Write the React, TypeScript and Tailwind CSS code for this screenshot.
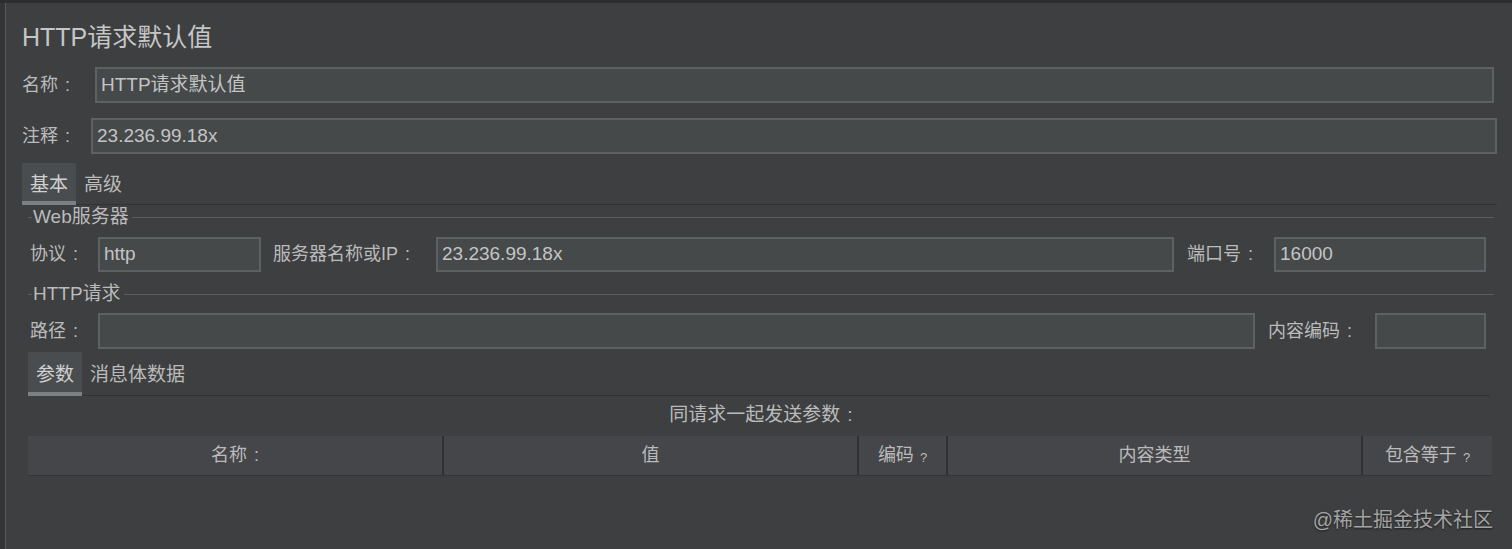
import React from 'react';

const FONT = "font-['Liberation_Sans','Noto_Sans_CJK_SC',sans-serif]";
const INPUT = 'h-full bg-[#45494a] border-2 border-[#5e6163] flex items-center px-[4px] text-[19px] text-[#c4c4c4]';
const LABEL = 'text-[18px] text-[#bbbbbb] whitespace-nowrap';

function Field({ value = '', className = '' }: { value?: string; className?: string }) {
  return <div className={`${INPUT} ${className}`}>{value}</div>;
}

function Label({ text, className = '' }: { text: string; className?: string }) {
  return (
    <div className={`${LABEL} ${className}`}>
      {text}
      <span className="ml-[7px]">:</span>
    </div>
  );
}

function Legend({ title }: { title: string }) {
  return (
    <div className="h-[22px] flex items-center">
      <div className="w-[4px] border-t border-[#595c5e]" />
      <span className="px-[1px] text-[19px] leading-[22px] text-[#bbbbbb]">{title}</span>
      <div className="flex-1 ml-[2px] border-t border-[#595c5e]" />
    </div>
  );
}

function Tabs({ items, h, pad }: { items: string[]; h: string; pad: string }) {
  return (
    <div className={`flex ${h}`}>
      {items.map((t, i) => (
        <div
          key={t}
          className={`flex items-center ${pad} text-[19px] ${
            i === 0
              ? 'bg-[#4a4d4f] border-b-4 border-[#7c8083] text-[#d0d0d0] pt-[7px]'
              : 'border-b border-[#313335] text-[#bbbbbb] pt-[4px]'
          }`}
        >
          {t}
        </div>
      ))}
      <div className="flex-1 border-b border-[#313335]" />
    </div>
  );
}

const COLUMNS = [
  { label: '名称', colon: true, w: 'w-[414px]' },
  { label: '值', w: 'w-[413px]' },
  { label: '编码', q: true, w: 'w-[87px]' },
  { label: '内容类型', w: 'w-[413px]' },
  { label: '包含等于', q: true, w: 'flex-1' },
];

export default function App() {
  return (
    <div className={`relative w-[1512px] h-[549px] overflow-hidden bg-[#3d3f41] border-t-[3px] border-[#2b2d2f] flex ${FONT}`}>
      <div className="w-[6px] bg-[#333537] border-r border-[#56595b]" />

      <div className="flex-1 flex flex-col pl-[16px] pr-[15px]">
        <div className="mt-[19px] text-[25px] leading-[30px] text-[#c6c6c6]">HTTP请求默认值</div>

        <div className="mt-[15px] h-[36px] flex items-center">
          <Label text="名称" className="w-[73px]" />
          <Field value="HTTP请求默认值" className="flex-1 mr-[3px]" />
        </div>

        <div className="mt-[15px] h-[36px] flex items-center">
          <Label text="注释" className="w-[69px]" />
          <Field value="23.236.99.18x" className="flex-1" />
        </div>

        <div className="mt-[9px]">
          <Tabs items={['基本', '高级']} h="h-[42px]" pad="px-[8px]" />
        </div>

        {/* basic panel */}
        <div className="pl-[6px] pr-[3px] flex flex-col">
          <div className="mt-[1px]">
            <Legend title="Web服务器" />
          </div>

          <div className="mt-[9px] h-[35px] flex items-center pl-[2px] pr-[8px]">
            <Label text="协议" className="w-[68px]" />
            <Field value="http" className="w-[163px]" />
            <Label text="服务器名称或IP" className="ml-[12px] w-[163px]" />
            <Field value="23.236.99.18x" className="flex-1" />
            <Label text="端口号" className="ml-[13px] w-[87px]" />
            <Field value="16000" className="w-[212px]" />
          </div>

          <div className="mt-[11px]">
            <Legend title="HTTP请求" />
          </div>

          <div className="mt-[8px] h-[36px] flex items-center pl-[2px] pr-[8px]">
            <Label text="路径" className="w-[68px]" />
            <Field className="flex-1" />
            <Label text="内容编码" className="ml-[13px] w-[107px]" />
            <Field className="w-[111px]" />
          </div>

          <div className="mt-[3px] pr-[4px]">
            <Tabs items={['参数', '消息体数据']} h="h-[44px]" pad="px-[8px]" />
          </div>

          <div className="mt-[8px] h-[22px] leading-[22px] text-center text-[19px] text-[#bbbbbb]">
            同请求一起发送参数<span className="ml-[7px]">:</span>
          </div>

          <div className="mt-[10px] h-[40px] flex gap-x-[2px] bg-[#2f3133] border-b border-[#333537] mr-[2px]">
            {COLUMNS.map((c) => (
              <div
                key={c.label}
                className={`${c.w} bg-[#454649] flex items-center justify-center text-[18px] text-[#bbbbbb]`}
              >
                {c.label}
                {c.colon && <span className="ml-[7px]">:</span>}
                {c.q && <span className="ml-[6px] text-[13px] mt-[4px]">?</span>}
              </div>
            ))}
          </div>
        </div>
      </div>

      <div className="absolute right-[19px] top-[505px] text-[20px] leading-[24px] text-[#a3a3a3] [text-shadow:0_1px_2px_rgba(0,0,0,0.6)]">
        @稀土掘金技术社区
      </div>
    </div>
  );
}
